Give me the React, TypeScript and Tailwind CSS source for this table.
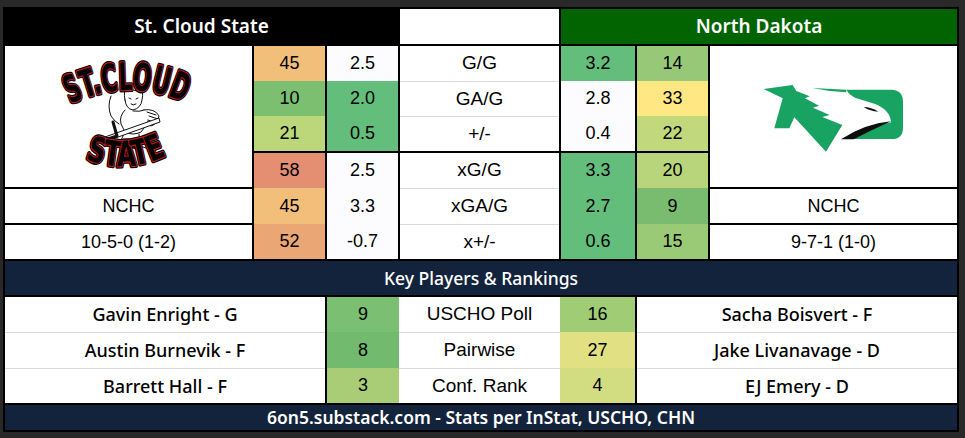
type Cell = { v: string; bg: string };

const leftRank: Cell[][] = [
  [
    { v: "45", bg: "bg-[#f2bf7b]" },
    { v: "10", bg: "bg-[#7cbf70]" },
    { v: "21", bg: "bg-[#bcd77a]" },
  ],
  [
    { v: "58", bg: "bg-[#e48f72]" },
    { v: "45", bg: "bg-[#f2bf7b]" },
    { v: "52", bg: "bg-[#eba676]" },
  ],
];

const leftVal: Cell[][] = [
  [
    { v: "2.5", bg: "bg-[#fcfcff]" },
    { v: "2.0", bg: "bg-[#63be7b]" },
    { v: "0.5", bg: "bg-[#63be7b]" },
  ],
  [
    { v: "2.5", bg: "bg-[#fcfcff]" },
    { v: "3.3", bg: "bg-[#fcfcff]" },
    { v: "-0.7", bg: "bg-[#fcfcff]" },
  ],
];

const rightVal: Cell[][] = [
  [
    { v: "3.2", bg: "bg-[#63be7b]" },
    { v: "2.8", bg: "bg-[#fcfcff]" },
    { v: "0.4", bg: "bg-[#fcfcff]" },
  ],
  [
    { v: "3.3", bg: "bg-[#63be7b]" },
    { v: "2.7", bg: "bg-[#63be7b]" },
    { v: "0.6", bg: "bg-[#63be7b]" },
  ],
];

const rightRank: Cell[][] = [
  [
    { v: "14", bg: "bg-[#97c877]" },
    { v: "33", bg: "bg-[#ffe884]" },
    { v: "22", bg: "bg-[#c2d87c]" },
  ],
  [
    { v: "20", bg: "bg-[#b8d57b]" },
    { v: "9", bg: "bg-[#79bc6f]" },
    { v: "15", bg: "bg-[#9bca77]" },
  ],
];

const labels = [
  ["G/G", "GA/G", "+/-"],
  ["xG/G", "xGA/G", "x+/-"],
];

const groupHeights = [
  ["h-[35px]", "h-[35px]", "h-[35px]"],
  ["h-[35px]", "h-[36px]", "h-[35px]"],
];

const players = [
  { left: "Gavin Enright - G", lr: "9", lbg: "bg-[#7abf72]", label: "USCHO Poll", rr: "16", rbg: "bg-[#a1cc76]", right: "Sacha Boisvert - F" },
  { left: "Austin Burnevik - F", lr: "8", lbg: "bg-[#72bb6e]", label: "Pairwise", rr: "27", rbg: "bg-[#e1e183]", right: "Jake Livanavage - D" },
  { left: "Barrett Hall - F", lr: "3", lbg: "bg-[#a9cd76]", label: "Conf. Rank", rr: "4", rbg: "bg-[#d2dc80]", right: "EJ Emery - D" },
];

function NumColumn({ groups, width }: { groups: Cell[][]; width: string }) {
  return (
    <div className={`flex flex-col gap-[2px] ${width}`}>
      {groups.map((g, gi) => (
        <div key={gi} className="flex flex-col">
          {g.map((c, i) => (
            <div key={i} className={`${groupHeights[gi][i]} ${c.bg} flex items-center justify-center text-[18px] text-black`}>
              {c.v}
            </div>
          ))}
        </div>
      ))}
    </div>
  );
}

function StCloudLogo() {
  return (
    <svg width="124" height="110" viewBox="0 0 124 110" className="overflow-visible">
      <defs>
        <path id="scTop" d="M3,42 Q62,14 121,42" />
        <path id="scBot" d="M18,97 Q61,114 104,91" />
      </defs>
      {/* mascot */}
      <g fill="none" stroke="#111" strokeWidth="1" strokeLinecap="round" strokeLinejoin="round">
        <path d="M44,34 Q40,44 44,54 Q48,60 52,62" />
        <path d="M58,38 Q56,28 60,24 L63,29 Q66,27 70,29 L73,24 Q77,29 75,38 Q74,46 66,48 Q59,47 58,38 Z" fill="#fff" />
        <path d="M62,36 L64,37 M69,37 L71,36 M64,42 Q66,44 69,42" />
        <path d="M58,48 Q52,54 54,62 L58,70 Q66,74 74,70 L80,62 Q84,54 78,48 Q72,50 66,49" fill="#fff" />
        <path d="M76,48 Q88,46 92,54 Q91,62 84,64" fill="#fff" />
        <path d="M80,50 L89,53 M82,54 L91,57 M81,58 L89,61" />
        <path d="M58,70 L53,80 L58,84 M72,72 L73,84 L79,86" />
        <path d="M38,75 L92,56 L93,60 L40,79 Z" fill="#fff" />
      </g>
      <path d="M46,60 L50,74 L38,78" fill="none" stroke="#111" strokeWidth="3" strokeLinecap="round" strokeLinejoin="round" />
      <ellipse cx="37" cy="80" rx="3" ry="2.4" fill="#fff" stroke="#111" strokeWidth="1" />
      <ellipse cx="68" cy="84" rx="4" ry="3" fill="#111" />
      {/* lettering */}
      <g fontFamily='"DejaVu Sans Condensed", "DejaVu Sans", sans-serif' fontWeight="700">
        <text fontSize="38" fill="#000" stroke="#000" strokeWidth="4.5" strokeLinejoin="round">
          <textPath href="#scTop" textLength="118" lengthAdjust="spacingAndGlyphs">ST.CLOUD</textPath>
        </text>
        <text fontSize="38" fill="#000" stroke="#c8161d" strokeWidth="2.2" strokeLinejoin="round" paintOrder="stroke">
          <textPath href="#scTop" textLength="118" lengthAdjust="spacingAndGlyphs">ST.CLOUD</textPath>
        </text>
        <text fontSize="35" fill="#000" stroke="#000" strokeWidth="4.5" strokeLinejoin="round">
          <textPath href="#scBot" textLength="84" lengthAdjust="spacingAndGlyphs">STATE</textPath>
        </text>
        <text fontSize="35" fill="#000" stroke="#c8161d" strokeWidth="2.2" strokeLinejoin="round" paintOrder="stroke">
          <textPath href="#scBot" textLength="84" lengthAdjust="spacingAndGlyphs">STATE</textPath>
        </text>
      </g>
    </svg>
  );
}

function NDLogo() {
  return (
    <svg width="150" height="80" viewBox="0 0 450 240">
      <path
        d="M14,36 L101,24 L112,42 L152,58 L138,64 L180,86 L162,92 L212,114 L190,120 L250,144 L201,224 L106,121 L91,154 L46,154 L71,64 Z"
        fill="#18a363"
      />
      <path d="M160,33 L262,38 L262,46 Q210,44 160,33 Z" fill="#18a363" />
      <path
        d="M262,38 L395,38 Q432,38 432,75 L432,152 Q432,186 398,186 L248,186 Q320,150 396,136 Q394,98 346,80 L300,66 Q272,58 262,38 Z"
        fill="#18a363"
      />
      <path d="M246,187 Q318,140 396,133 Q340,158 284,187 Z" fill="#0d0d0d" />
      <path d="M314,90 Q336,90 358,104 Q334,103 314,90 Z" fill="#0d0d0d" />
    </svg>
  );
}

const nameCls = "font-['Noto_Sans',Inter,sans-serif] font-medium";

export default function App() {
  return (
    <div className="w-[965px] h-[438px] bg-[#292929] pt-[7px] pl-[3px] font-['Liberation_Sans',Arial,sans-serif]">
      <div className="w-[956px] bg-black p-[2px] flex flex-col gap-[2px]">
        {/* header */}
        <div className="flex gap-[2px] h-[35px] text-white text-[19px] font-['Noto_Sans',Inter,sans-serif] font-semibold">
          <div className="w-[393px] bg-black flex items-center justify-center">St. Cloud State</div>
          <div className="w-[159px] bg-white" />
          <div className="w-[396px] bg-[#016401] flex items-center justify-center">North Dakota</div>
        </div>

        {/* stats */}
        <div className="flex gap-[2px] h-[213px] text-black">
          <div className="w-[247px] flex flex-col gap-[2px] text-[18px]">
            <div className="h-[141px] bg-white flex items-center justify-center">
              <StCloudLogo />
            </div>
            <div className="h-[34px] bg-white flex items-center justify-center">NCHC</div>
            <div className="h-[34px] bg-white flex items-center justify-center">10-5-0 (1-2)</div>
          </div>
          <NumColumn groups={leftRank} width="w-[71px]" />
          <NumColumn groups={leftVal} width="w-[71px]" />
          <div className="w-[159px] flex flex-col gap-[2px]">
            {labels.map((g, gi) => (
              <div key={gi} className="flex flex-col bg-white">
                {g.map((l, i) => (
                  <div
                    key={l}
                    className={`${groupHeights[gi][i]} flex items-center justify-center text-[19px] ${i > 0 ? "border-t border-[#dadada]" : ""}`}
                  >
                    {l}
                  </div>
                ))}
              </div>
            ))}
          </div>
          <NumColumn groups={rightVal} width="w-[74px]" />
          <NumColumn groups={rightRank} width="w-[71px]" />
          <div className="w-[247px] flex flex-col gap-[2px] text-[18px]">
            <div className="h-[141px] bg-white flex items-center justify-center">
              <NDLogo />
            </div>
            <div className="h-[34px] bg-white flex items-center justify-center">NCHC</div>
            <div className="h-[34px] bg-white flex items-center justify-center">9-7-1 (1-0)</div>
          </div>
        </div>

        {/* key players band */}
        <div className={`h-[34px] bg-[#13233c] flex items-center justify-center text-white text-[17.5px] ${nameCls}`}>
          Key Players &amp; Rankings
        </div>

        {/* players */}
        <div className="flex gap-[2px] h-[106px] text-black">
          <div className={`w-[320px] flex flex-col bg-white text-[18px] ${nameCls}`}>
            {players.map((p, i) => (
              <div key={p.left} className={`${groupHeights[1][i]} flex items-center justify-center ${i > 0 ? "border-t border-[#dadada]" : ""}`}>
                {p.left}
              </div>
            ))}
          </div>
          <div className="w-[308px] flex flex-col">
            {players.map((p, i) => (
              <div key={p.label} className={`${groupHeights[1][i]} flex`}>
                <div className={`w-[72px] ${p.lbg} flex items-center justify-center text-[18px]`}>{p.lr}</div>
                <div className={`w-[161px] bg-white flex items-center justify-center text-[19px] ${i > 0 ? "border-t border-[#dadada]" : ""}`}>
                  {p.label}
                </div>
                <div className={`w-[75px] ${p.rbg} flex items-center justify-center text-[18px]`}>{p.rr}</div>
              </div>
            ))}
          </div>
          <div className={`w-[320px] flex flex-col bg-white text-[18px] ${nameCls}`}>
            {players.map((p, i) => (
              <div key={p.right} className={`${groupHeights[1][i]} flex items-center justify-center ${i > 0 ? "border-t border-[#dadada]" : ""}`}>
                {p.right}
              </div>
            ))}
          </div>
        </div>

        {/* footer */}
        <div className="h-[25px] bg-[#13233c] flex items-center justify-center text-white text-[17.5px] font-['Noto_Sans',Inter,sans-serif] font-semibold">
          6on5.substack.com - Stats per InStat, USCHO, CHN
        </div>
      </div>
    </div>
  );
}
